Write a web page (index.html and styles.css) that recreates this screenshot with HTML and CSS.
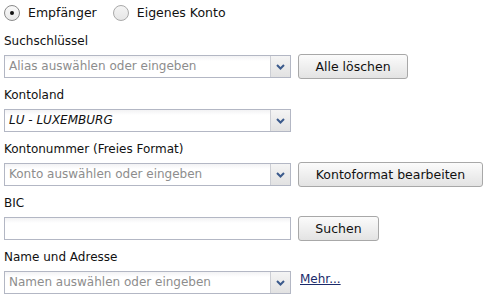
FILE: index.html
```html
<!DOCTYPE html>
<html lang="de">
<head>
<meta charset="utf-8">
<link rel="stylesheet" href="styles.css">
</head>
<body>
<div class="form">
  <div class="radios">
    <label class="radio"><span class="dot on"></span>Empfänger</label>
    <label class="radio"><span class="dot"></span>Eigenes Konto</label>
  </div>

  <div class="field">
    <div class="label">Suchschlüssel</div>
    <div class="row">
      <div class="combo"><span class="text ph">Alias auswählen oder eingeben</span><span class="drop"><svg width="9" height="6" viewBox="0 0 9 6"><path d="M1 1 L4.5 4.5 L8 1" fill="none" stroke="#3b5a8c" stroke-width="2"/></svg></span></div>
      <button class="btn w-alle">Alle löschen</button>
    </div>
  </div>

  <div class="field">
    <div class="label">Kontoland</div>
    <div class="row">
      <div class="combo"><span class="text val">LU - LUXEMBURG</span><span class="drop"><svg width="9" height="6" viewBox="0 0 9 6"><path d="M1 1 L4.5 4.5 L8 1" fill="none" stroke="#3b5a8c" stroke-width="2"/></svg></span></div>
    </div>
  </div>

  <div class="field">
    <div class="label">Kontonummer (Freies Format)</div>
    <div class="row">
      <div class="combo"><span class="text ph">Konto auswählen oder eingeben</span><span class="drop"><svg width="9" height="6" viewBox="0 0 9 6"><path d="M1 1 L4.5 4.5 L8 1" fill="none" stroke="#3b5a8c" stroke-width="2"/></svg></span></div>
      <button class="btn w-konto">Kontoformat bearbeiten</button>
    </div>
  </div>

  <div class="field">
    <div class="label">BIC</div>
    <div class="row">
      <div class="combo plain"><span class="text"></span></div>
      <button class="btn w-suchen">Suchen</button>
    </div>
  </div>

  <div class="field">
    <div class="label">Name und Adresse</div>
    <div class="row">
      <div class="combo"><span class="text ph">Namen auswählen oder eingeben</span><span class="drop"><svg width="9" height="6" viewBox="0 0 9 6"><path d="M1 1 L4.5 4.5 L8 1" fill="none" stroke="#3b5a8c" stroke-width="2"/></svg></span></div>
      <a class="more" href="#">Mehr...</a>
    </div>
  </div>
</div>
</body>
</html>
```

FILE: styles.css
```css
html, body {
  margin: 0;
  padding: 0;
  background: #fff;
}
body {
  font-family: "DejaVu Sans", Verdana, sans-serif;
  font-size: 12px;
  color: #111;
}
.form {
  padding: 0 4px;
  display: flex;
  flex-direction: column;
  gap: 7px;
}
.radios {
  height: 25px;
  display: flex;
  align-items: center;
  gap: 16px;
}
.radio {
  display: flex;
  align-items: center;
  gap: 8px;
  font-size: 12.5px;
}
.dot {
  width: 14px;
  height: 14px;
  border: 1px solid #a9a9a9;
  border-radius: 50%;
  background: linear-gradient(#f4f4f4, #e6e6e6);
  position: relative;
  box-sizing: content-box;
}
.dot.on {
  border-color: #8a8a8a;
  background: linear-gradient(#f9f9f9, #e9e9e9);
}
.dot.on::after {
  content: "";
  position: absolute;
  left: 5px;
  top: 5px;
  width: 4px;
  height: 4px;
  border-radius: 50%;
  background: #111;
}
.field {
  display: flex;
  flex-direction: column;
  gap: 4px;
}
.label {
  height: 18px;
  line-height: 18px;
}
.row {
  height: 25px;
  display: flex;
  align-items: center;
  gap: 7px;
}
.combo {
  width: 287px;
  height: 23px;
  box-sizing: border-box;
  border: 1px solid #b3b7c4;
  background: linear-gradient(#f2f2f4 0, #fff 5px);
  display: flex;
}
.combo .text {
  flex: 1;
  padding-left: 4px;
  line-height: 21px;
  white-space: nowrap;
  overflow: hidden;
}
.ph {
  color: #8d8d8d;
}
.val {
  font-style: italic;
  color: #111;
}
.drop {
  width: 19px;
  border-left: 1px solid #ccced4;
  background: linear-gradient(#f4f4f4, #e2e2e2);
  display: flex;
  align-items: center;
  justify-content: center;
}
.btn {
  height: 25px;
  box-sizing: border-box;
  border: 1px solid #a8a8a8;
  border-radius: 3px;
  background: linear-gradient(#fbfbfb, #e3e3e3);
  font-family: "DejaVu Sans", Verdana, sans-serif;
  font-size: 12.5px;
  color: #111;
  padding: 0;
}
.w-alle { width: 110px; }
.w-konto { width: 185px; }
.w-suchen { width: 81px; }
.more {
  margin-left: 2px;
  margin-top: -8px;
  color: #1a2a6a;
  text-decoration: underline;
  font-size: 12px;
}
```
